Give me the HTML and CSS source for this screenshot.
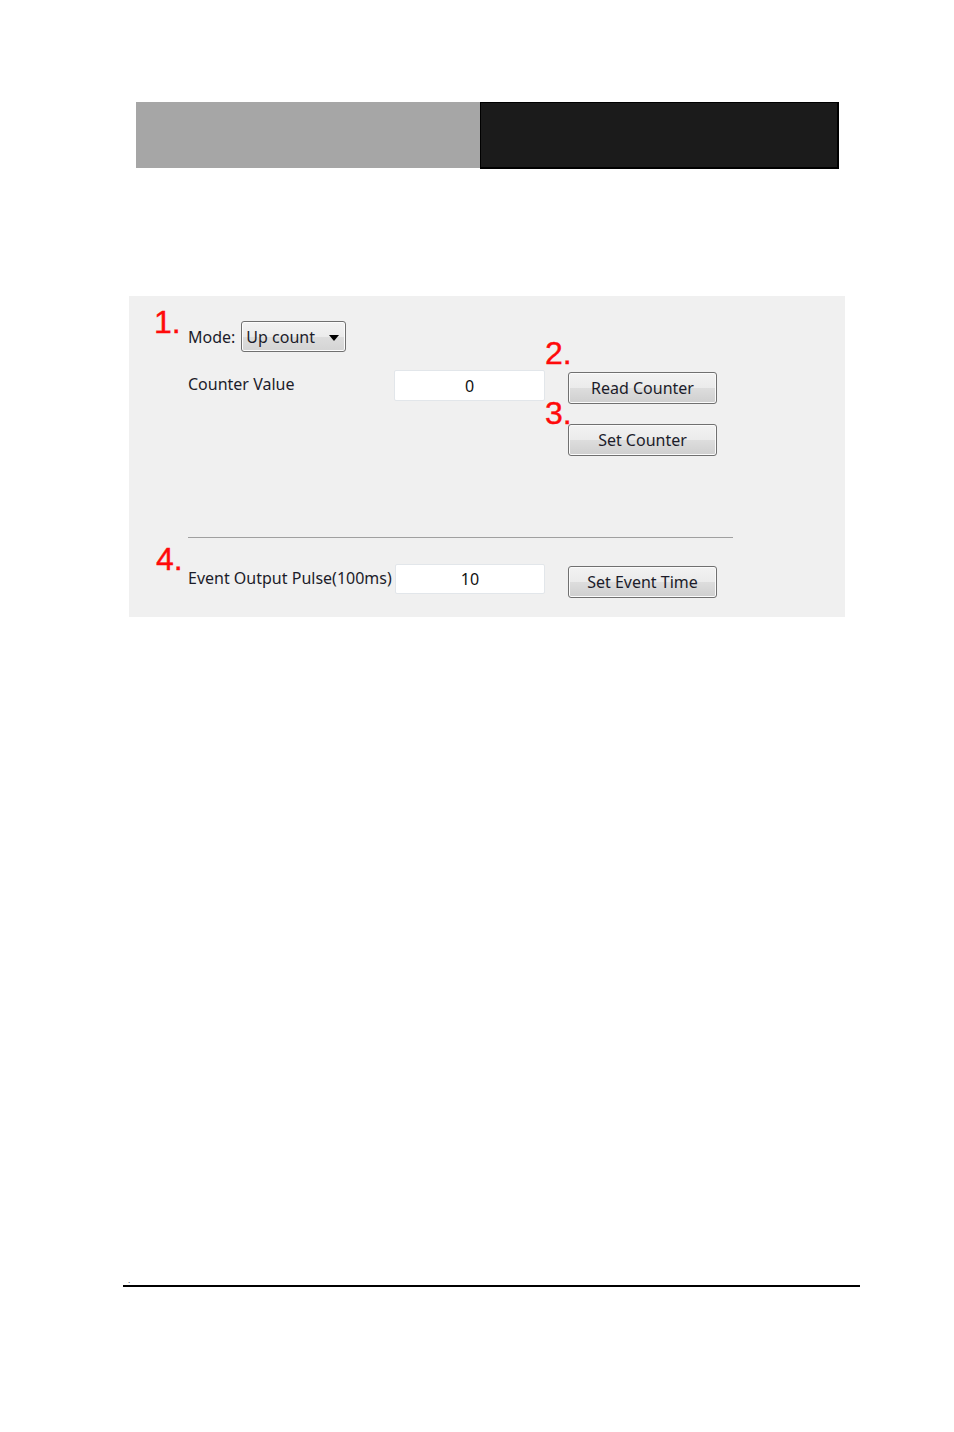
FILE: index.html
```html
<!DOCTYPE html>
<html>
<head>
<meta charset="utf-8">
<link rel="stylesheet" href="styles.css">
</head>
<body>
<div class="header">
  <div class="header-gray"></div>
  <div class="header-dark"></div>
</div>

<div class="panel">
  <span class="anno anno-1">1.</span>
  <span class="anno anno-2">2.</span>
  <span class="anno anno-3">3.</span>
  <span class="anno anno-4">4.</span>

  <div class="row-mode">
    <span class="label">Mode:</span>
    <div class="select">
      <span class="select-text">Up count</span>
      <span class="select-arrow"></span>
    </div>
  </div>

  <div class="row-counter">
    <span class="label label-col">Counter Value</span>
    <div class="input">0</div>
    <div class="btn-col">
      <div class="btn">Read Counter</div>
      <div class="btn">Set Counter</div>
    </div>
  </div>

  <div class="separator"></div>

  <div class="row-event">
    <span class="label label-col label-event">Event Output Pulse(100ms)</span>
    <div class="input input-event">10</div>
    <div class="btn btn-event">Set Event Time</div>
  </div>
</div>

<div class="footer">
  <span class="footer-dot">.</span>
  <div class="footer-line"></div>
</div>
</body>
</html>
```

FILE: styles.css
```css
html, body {
  margin: 0;
  padding: 0;
  background: #ffffff;
}
body {
  width: 954px;
  height: 1432px;
  font-family: "Noto Sans", "DejaVu Sans", sans-serif;
}

.header {
  display: flex;
  margin: 102px 0 0 136px;
  height: 66px;
}
.header-gray {
  width: 344px;
  background: #a6a6a6;
}
.header-dark {
  width: 359px;
  background: #1b1b1b;
  border: 1px solid #000;
  border-width: 1px 2px 2px 1px;
  margin-bottom: -1px;
  box-sizing: border-box;
  height: 67px;
}

.panel {
  position: relative;
  margin: 128px 0 0 129px;
  width: 716px;
  height: 321px;
  box-sizing: border-box;
  padding: 25px 0 0 59px;
  background: #f0f0f0;
  color: #1c1c2a;
  font-size: 16px;
}

.anno {
  position: absolute;
  font-family: "Liberation Sans", Arial, sans-serif;
  font-size: 32px;
  line-height: 32px;
  color: #ff0a0a;
  -webkit-text-stroke: 0.4px #ff0a0a;
}
.anno-1 { left: 25px; top: 10px; }
.anno-2 { left: 416px; top: 41px; }
.anno-3 { left: 416px; top: 101px; }
.anno-4 { left: 27px; top: 247px; }

.label {
  white-space: nowrap;
  line-height: 20px;
}

.row-mode {
  display: flex;
  align-items: center;
  gap: 6px;
  height: 31px;
}
.select {
  width: 105px;
  height: 31px;
  box-sizing: border-box;
  border: 1px solid #707070;
  border-radius: 3px;
  background: linear-gradient(#f3f3f3 0%, #ebebeb 50%, #dddddd 51%, #d4d4d4 100%);
  box-shadow: inset 0 0 0 1px #fcfcfc;
  display: flex;
  align-items: center;
  padding: 0 6px 0 4px;
  justify-content: space-between;
}
.select-text {
  line-height: 20px;
  font-size: 16px;
}
.select-arrow {
  width: 0;
  height: 0;
  border-left: 5px solid transparent;
  border-right: 5px solid transparent;
  border-top: 6px solid #000;
  margin-top: 2px;
}

.row-counter {
  display: flex;
  margin-top: 18px;
  align-items: flex-start;
}
.label-col {
  width: 206px;
  flex: none;
}
.row-counter .label-col {
  margin-top: 4px;
}
.input {
  width: 151px;
  height: 31px;
  box-sizing: border-box;
  flex: none;
  background: #ffffff;
  border: 1px solid #e2e6ea;
  border-radius: 2px;
  display: flex;
  align-items: center;
  justify-content: center;
  font-size: 16px;
  color: #111;
}
.btn-col {
  display: flex;
  flex-direction: column;
  gap: 20px;
  margin: 2px 0 0 23px;
}
.btn {
  width: 149px;
  height: 32px;
  box-sizing: border-box;
  border: 1px solid #707070;
  border-radius: 3px;
  background: linear-gradient(#f2f2f2 0%, #ebebeb 50%, #dddddd 51%, #cfcfcf 100%);
  box-shadow: inset 0 0 0 1px #fbfbfb;
  display: flex;
  align-items: center;
  justify-content: center;
  font-size: 16px;
  color: #1c1c2a;
  white-space: nowrap;
}

.separator {
  width: 545px;
  height: 1px;
  background: #a0a0a0;
  margin-top: 81px;
}

.row-event {
  display: flex;
  margin-top: 26px;
  height: 34px;
  align-items: flex-start;
}
.row-event .label-col {
  margin-top: 4px;
  width: 207px;
}
.label-event {
  letter-spacing: 0;
}
.input-event {
  width: 150px;
  height: 30px;
}
.btn-event {
  margin: 2px 0 0 23px;
}

.footer {
  margin: 660px 0 0 123px;
  width: 737px;
}
.footer-dot {
  display: block;
  font-family: "Liberation Sans", Arial, sans-serif;
  font-size: 8px;
  line-height: 8px;
  padding-left: 5px;
  color: #000;
}
.footer-line {
  height: 2px;
  background: #000;
}
```
